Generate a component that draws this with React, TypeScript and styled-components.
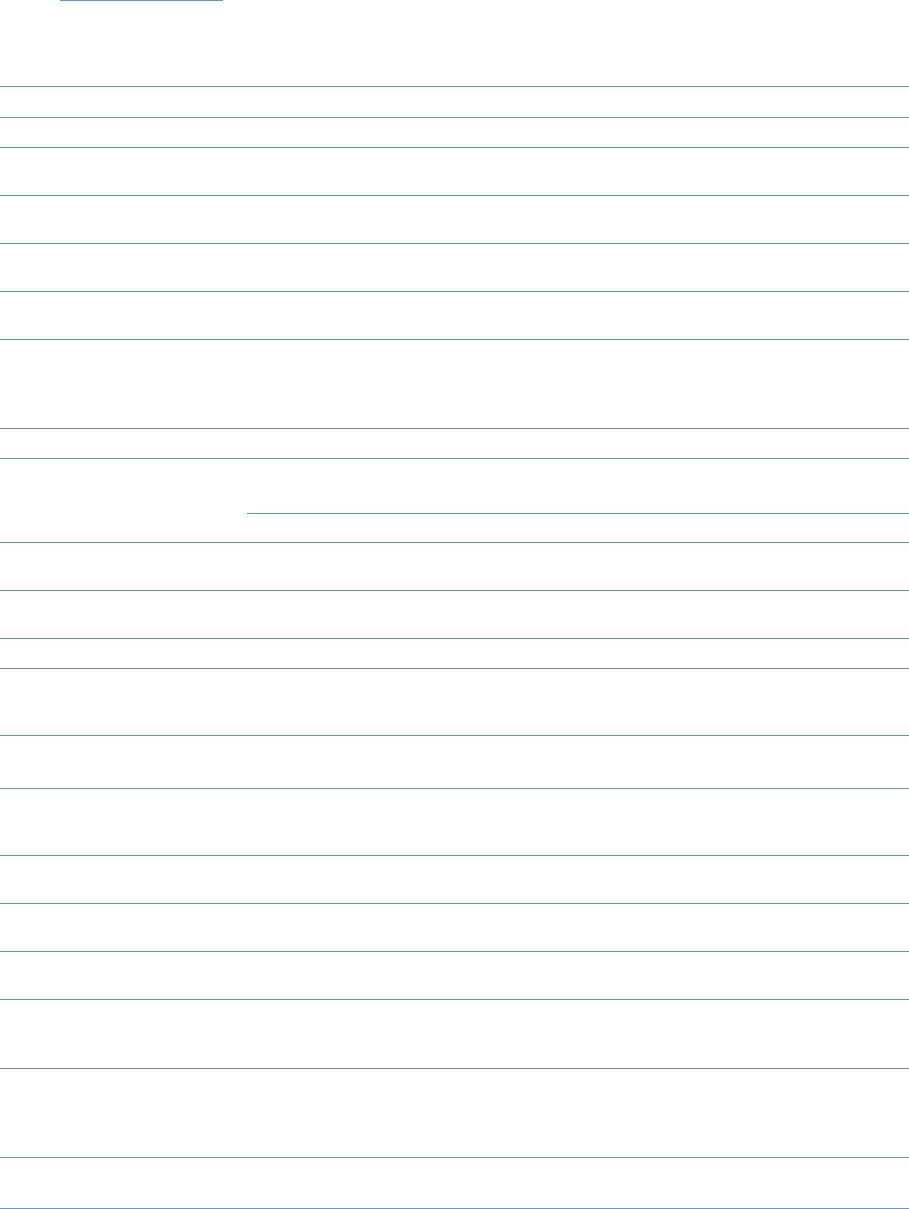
import React from "react";
import styled, { createGlobalStyle } from "styled-components";

const Global = createGlobalStyle`
  html, body { margin: 0; padding: 0; background: #ffffff; }
  body { font-family: "Liberation Sans", Arial, sans-serif; color: #ffffff; }
`;

const LINE = "#5b9bd5";

const Page = styled.div`
  width: 909px;
  display: flex;
  flex-direction: column;
`;

const Header = styled.header`
  height: 86px;
  padding-left: 60px;
  box-sizing: border-box;
`;

const TopLink = styled.a`
  display: block;
  width: 163px;
  height: 0;
  border-top: 1px solid ${LINE};
`;

const Table = styled.div`
  display: flex;
  flex-direction: column;
  border-top: 1px solid ${LINE};
`;

const Row = styled.div<{ $h: number }>`
  display: grid;
  grid-template-columns: 247px 1fr;
  height: ${(p) => p.$h}px;
  border-bottom: 1px solid ${LINE};
`;

const Cell = styled.div`
  display: flex;
  flex-direction: column;
`;

const SubRow = styled.div<{ $h: number; $line?: boolean }>`
  height: ${(p) => p.$h}px;
  border-bottom: ${(p) => (p.$line ? `1px solid ${LINE}` : "none")};
`;

const heights = [30, 29, 47, 47, 47, 47, 88, 29, -1, 47, 47, 29, 66, 52, 66, 47, 47, 47, 68, 88, 50];

export default function App() {
  return (
    <Page>
      <Global />
      <Header>
        <TopLink href="#" aria-label="link" />
      </Header>
      <Table>
        {heights.map((h, i) =>
          h === -1 ? (
            <Row key={i} $h={83}>
              <Cell />
              <Cell>
                <SubRow $h={54} $line />
                <SubRow $h={28} />
              </Cell>
            </Row>
          ) : (
            <Row key={i} $h={h}>
              <Cell />
              <Cell />
            </Row>
          )
        )}
      </Table>
    </Page>
  );
}
